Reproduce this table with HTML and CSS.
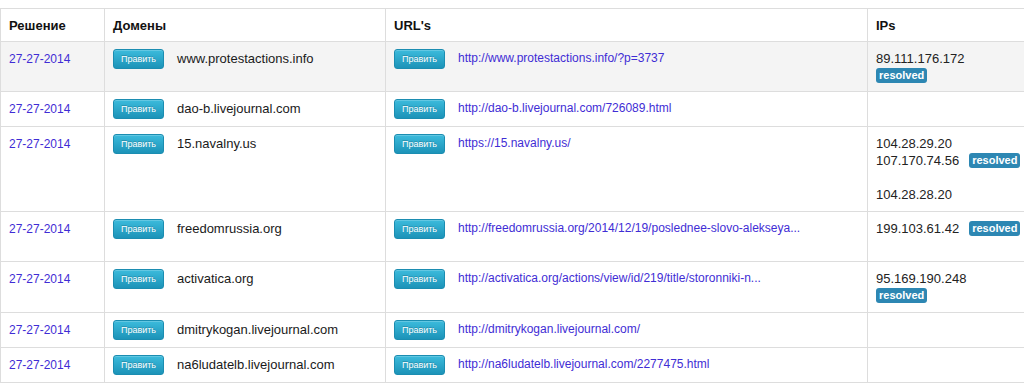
FILE: index.html
```html
<!DOCTYPE html>
<html lang="ru">
<head>
    <meta charset="UTF-8">
    <meta name="viewport" content="width=device-width, initial-scale=1.0">
    <title>Решения</title>
    <link rel="stylesheet" href="styles.css">
</head>
<body>
    <table class="list">
        <colgroup>
            <col class="c-date">
            <col class="c-domain">
            <col class="c-url">
            <col class="c-ip">
        </colgroup>
        <thead>
            <tr>
                <th>Решение</th>
                <th>Домены</th>
                <th>URL's</th>
                <th>IPs</th>
            </tr>
        </thead>
        <tbody>
            <tr class="active">
                <td><a class="date" href="#">27-27-2014</a></td>
                <td><div class="item"><button class="btn">Править</button><span class="domain">www.protestactions.info</span></div></td>
                <td><div class="item"><button class="btn">Править</button><a class="url" href="#">http://www.protestactions.info/?p=3737</a></div></td>
                <td>
                    <div class="ip">89.111.176.172</div>
                    <div class="ip short"><span class="label">resolved</span></div>
                </td>
            </tr>
            <tr>
                <td><a class="date" href="#">27-27-2014</a></td>
                <td><div class="item"><button class="btn">Править</button><span class="domain">dao-b.livejournal.com</span></div></td>
                <td><div class="item"><button class="btn">Править</button><a class="url" href="#">http://dao-b.livejournal.com/726089.html</a></div></td>
                <td></td>
            </tr>
            <tr>
                <td><a class="date" href="#">27-27-2014</a></td>
                <td><div class="item"><button class="btn">Править</button><span class="domain">15.navalny.us</span></div></td>
                <td><div class="item"><button class="btn">Править</button><a class="url" href="#">https://15.navalny.us/</a></div></td>
                <td>
                    <div class="ip">104.28.29.20</div>
                    <div class="ip">107.170.74.56 <span class="label">resolved</span></div>
                    <div class="ip"></div>
                    <div class="ip">104.28.28.20</div>
                </td>
            </tr>
            <tr>
                <td><a class="date" href="#">27-27-2014</a></td>
                <td><div class="item"><button class="btn">Править</button><span class="domain">freedomrussia.org</span></div></td>
                <td><div class="item"><button class="btn">Править</button><a class="url" href="#">http://freedomrussia.org/2014/12/19/poslednee-slovo-alekseya...</a></div></td>
                <td>
                    <div class="ip">199.103.61.42 <span class="label">resolved</span></div>
                    <div class="ip short"></div>
                </td>
            </tr>
            <tr>
                <td><a class="date" href="#">27-27-2014</a></td>
                <td><div class="item"><button class="btn">Править</button><span class="domain">activatica.org</span></div></td>
                <td><div class="item"><button class="btn">Править</button><a class="url" href="#">http://activatica.org/actions/view/id/219/title/storonniki-n...</a></div></td>
                <td>
                    <div class="ip">95.169.190.248</div>
                    <div class="ip"><span class="label">resolved</span></div>
                </td>
            </tr>
            <tr>
                <td><a class="date" href="#">27-27-2014</a></td>
                <td><div class="item"><button class="btn">Править</button><span class="domain">dmitrykogan.livejournal.com</span></div></td>
                <td><div class="item"><button class="btn">Править</button><a class="url" href="#">http://dmitrykogan.livejournal.com/</a></div></td>
                <td></td>
            </tr>
            <tr>
                <td><a class="date" href="#">27-27-2014</a></td>
                <td><div class="item"><button class="btn">Править</button><span class="domain">na6ludatelb.livejournal.com</span></div></td>
                <td><div class="item"><button class="btn">Править</button><a class="url" href="#">http://na6ludatelb.livejournal.com/2277475.html</a></div></td>
                <td></td>
            </tr>
        </tbody>
    </table>
</body>
</html>
```

FILE: styles.css
```css
html, body {
    overflow: hidden;
}

body {
    margin: 0;
    background-color: #fff;
    font-family: "Liberation Sans", Arial, sans-serif;
    font-size: 13px;
    color: #222;
}

.list {
    margin-top: 8px;
    width: 1026px;
    table-layout: fixed;
    border-collapse: separate;
    border-spacing: 0;
    border-bottom: 1px solid #ddd;
}

.c-date {
    width: 104px;
}

.c-domain {
    width: 281px;
}

.c-url {
    width: 482px;
}

.c-ip {
    width: 159px;
}

.list th,
.list td {
    box-sizing: border-box;
    border-top: 1px solid #ddd;
    border-left: 1px solid #ddd;
    padding: 8px;
    line-height: 17px;
    text-align: left;
    vertical-align: top;
}

.list th {
    height: 33px;
    padding-bottom: 6px;
    font-weight: bold;
    color: #111;
}

.list tr.active td {
    background-color: #f4f4f4;
}

.date,
.url {
    color: #3f2dd5;
    font-size: 12px;
    text-decoration: none;
    white-space: nowrap;
}

.item {
    display: flex;
    align-items: center;
    gap: 13px;
    height: 17px;
}

.domain {
    color: #1a1a1a;
    white-space: nowrap;
}

.btn {
    flex: none;
    width: 51px;
    height: 20px;
    padding: 0;
    border: 1px solid #1b8db1;
    border-radius: 3px;
    background: linear-gradient(#3cbbdc, #1c93b8);
    color: #fff;
    font-family: "Liberation Sans", Arial, sans-serif;
    font-size: 9px;
    text-shadow: 0 -1px 0 rgba(0, 0, 0, 0.2);
    box-shadow: inset 0 1px 0 rgba(255, 255, 255, 0.2);
}

.ip {
    display: flex;
    align-items: center;
    gap: 10px;
    height: 17px;
    white-space: nowrap;
}

.ip.short {
    height: 16px;
}

.label {
    display: inline-block;
    padding: 1px 3px;
    line-height: 13px;
    border-radius: 3px;
    background-color: #2d87b3;
    color: #fff;
    font-size: 11px;
    font-weight: bold;
}
```
